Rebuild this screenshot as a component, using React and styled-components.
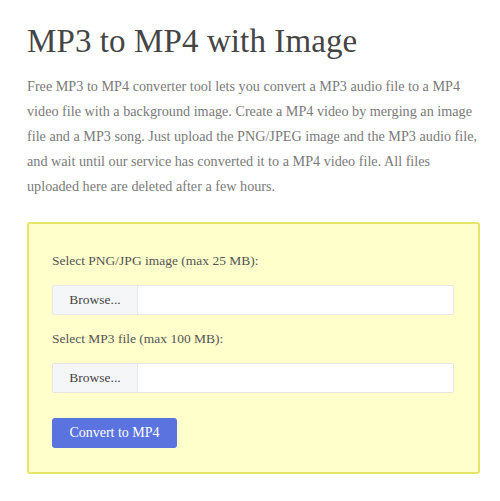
import React from 'react'
import styled, { createGlobalStyle } from 'styled-components'

const GlobalStyle = createGlobalStyle`
  html, body {
    margin: 0;
    padding: 0;
    background: #ffffff;
  }
  body {
    font-family: 'Liberation Serif', 'DejaVu Serif', serif;
  }
`

const Page = styled.div`
  width: 500px;
  height: 501px;
  box-sizing: border-box;
  padding: 21px 20px 0 27px;
`

const Title = styled.h1`
  margin: 0;
  font-size: 33px;
  font-weight: 400;
  line-height: 40px;
  color: #454545;
  letter-spacing: 0.1px;
`

const Intro = styled.p`
  margin: 13px 0 0;
  font-size: 14.2px;
  line-height: 25px;
  color: #7a7a7a;
  white-space: nowrap;
`

const Panel = styled.form`
  margin-top: 23px;
  width: 453px;
  box-sizing: border-box;
  background: #ffffcc;
  border: 2px solid #e6e66a;
  border-radius: 3px;
  padding: 27px 24px 24px 23px;
  display: flex;
  flex-direction: column;
`

const Label = styled.label`
  font-size: 13.5px;
  line-height: 20px;
  color: #555555;
  margin-bottom: 14px;
`

const FileRow = styled.div`
  display: flex;
  height: 28px;
  border: 1px solid #e6e6e6;
  border-radius: 2px;
  background: #ffffff;
  margin-bottom: 14px;
`

const BrowseBtn = styled.span`
  width: 84px;
  display: flex;
  align-items: center;
  justify-content: center;
  background: #f5f6f8;
  border-right: 1px solid #e6e6e6;
  font-size: 13.5px;
  color: #444444;
`

const SubmitBtn = styled.button`
  align-self: flex-start;
  margin-top: 11px;
  width: 125px;
  height: 30px;
  border: none;
  border-radius: 3px;
  background: #5a73de;
  color: #ffffff;
  font-family: inherit;
  font-size: 14px;
  cursor: pointer;
`

const FileField = ({ label }) => (
  <>
    <Label>{label}</Label>
    <FileRow>
      <BrowseBtn>Browse...</BrowseBtn>
    </FileRow>
  </>
)

export default function App() {
  return (
    <Page>
      <GlobalStyle />
      <Title>MP3 to MP4 with Image</Title>
      <Intro>
        Free MP3 to MP4 converter tool lets you convert a MP3 audio file to a MP4
        <br />
        video file with a background image. Create a MP4 video by merging an image
        <br />
        file and a MP3 song. Just upload the PNG/JPEG image and the MP3 audio file,
        <br />
        and wait until our service has converted it to a MP4 video file. All files
        <br />
        uploaded here are deleted after a few hours.
      </Intro>
      <Panel onSubmit={(e) => e.preventDefault()}>
        <FileField label="Select PNG/JPG image (max 25 MB):" />
        <FileField label="Select MP3 file (max 100 MB):" />
        <SubmitBtn type="submit">Convert to MP4</SubmitBtn>
      </Panel>
    </Page>
  )
}
